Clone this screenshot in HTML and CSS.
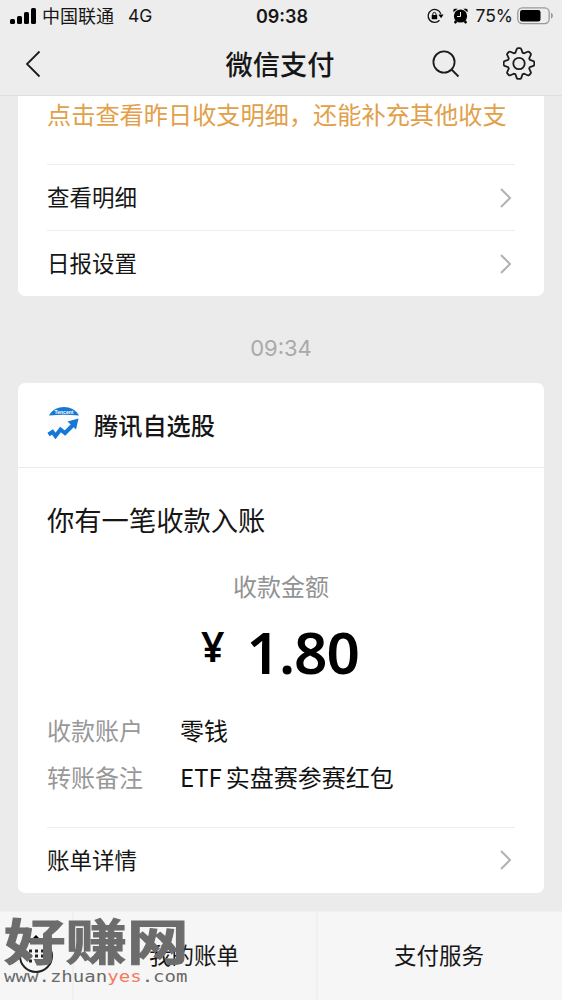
FILE: index.html
```html
<!DOCTYPE html>
<html lang="zh-CN">
<head>
<meta charset="utf-8">
<title>微信支付</title>
<link rel="stylesheet" href="styles.css">
</head>
<body>
<div class="screen">
  <header class="top">
    <div class="status">
      <div class="status-left">
        <svg class="signal" width="26" height="16" viewBox="0 0 26 16"><rect x="0" y="11" width="5" height="5" rx="1.5"/><rect x="7" y="8" width="5" height="8" rx="1.5"/><rect x="14" y="4" width="5" height="12" rx="1.5"/><rect x="21" y="0" width="5" height="16" rx="1.5"/></svg>
        <span class="carrier">中国联通</span><span class="network">4G</span>
      </div>
      <span class="clock">09:38</span>
      <div class="status-right">
        <svg width="17" height="16" viewBox="0 0 17 16"><path d="M12.500 12.300A6.500 6.500 0 1 1 13.800 5.800" fill="none" stroke="#111" stroke-width="1.300"/><path d="M11.300 6.500h5.200l-2.400 3.800z"/><rect x="4.700" y="7" width="5.500" height="4.200" rx=".6"/><path d="M5.800 7.500V6a1.600 1.600 0 0 1 3.200 0v1.500" fill="none" stroke="#111" stroke-width="1"/></svg>
        <svg class="alarm" width="15" height="16" viewBox="0 0 15 16"><circle cx="7.500" cy="8" r="6.600"/><path d="M.4 4.200V2Q.5.700 2 .7H4.700zM10.300.7H13Q14.500.700 14.600 2v2.200zM2 12l2.500 2L2.500 15.800 1 14.800zM13 12l-2.500 2 2 1.800 1.500-1z"/><path d="M7.500 4v4.500H4" fill="none" stroke="#ededed" stroke-width="1"/></svg>
        <span class="percent">75%</span>
        <svg class="battery" width="37" height="18" viewBox="0 0 37 18"><rect x=".8" y=".8" width="31.400" height="15.800" rx="4.500" fill="none" stroke="#999" stroke-width="1.300"/><rect x="3" y="3" width="20.500" height="11.500" rx="2.300"/><path d="M34 6c2.500.5 2.500 5 0 5.500z" fill="#999"/></svg>
      </div>
    </div>
    <nav class="nav">
      <svg class="back" width="16" height="28" viewBox="0 0 16 28"><path d="M14.500 1.500 2 14l12.500 12.500"/></svg>
      <h1 class="title">微信支付</h1>
      <div class="actions">
        <svg width="28" height="28" viewBox="0 0 28 28"><circle cx="12" cy="12" r="10.600"/><path d="m19.500 19.500 7 7"/></svg>
        <svg width="32" height="33" viewBox="-16 -16.500 32 33"><circle r="5.700"/><path d="M-3.600-10.800L-2.300-14.400Q-2-15.300-1-15.300H1Q2-15.300 2.300-14.400L3.600-10.800 5.100-10.200 8.600-11.800Q9.500-12.200 10.200-11.500L11.500-10.200Q12.200-9.500 11.800-8.600L10.200-5.100 10.800-3.600 14.400-2.300Q15.300-2 15.300-1V1Q15.300 2 14.400 2.300L10.800 3.600 10.200 5.100 11.800 8.600Q12.200 9.500 11.500 10.200L10.200 11.500Q9.500 12.200 8.600 11.800L5.100 10.200 3.600 10.800 2.300 14.400Q2 15.300 1 15.300H-1Q-2 15.300-2.300 14.400L-3.600 10.800-5.100 10.200-8.600 11.800Q-9.500 12.200-10.200 11.500L-11.500 10.200Q-12.200 9.500-11.800 8.600L-10.200 5.100-10.800 3.600-14.400 2.300Q-15.300 2-15.300 1V-1Q-15.300-2-14.400-2.300L-10.800-3.600-10.200-5.100-11.800-8.600Q-12.200-9.500-11.500-10.200L-10.200-11.500Q-9.500-12.200-8.600-11.800L-5.100-10.200Z"/></svg>
      </div>
    </nav>
  </header>

  <main class="feed">
    <section class="card daily">
      <p class="notice">点击查看昨日收支明细，还能补充其他收支</p>
      <div class="row"><span>查看明细</span><svg class="chevron" width="12" height="20" viewBox="0 0 12 20"><path d="m1 1 9 9-9 9"/></svg></div>
      <div class="row"><span>日报设置</span><svg class="chevron" width="12" height="20" viewBox="0 0 12 20"><path d="m1 1 9 9-9 9"/></svg></div>
    </section>
    <time class="time">09:34</time>
    <section class="card payment">
      <div class="merchant">
        <svg class="logo" width="34" height="36" viewBox="0 0 34 36"><circle cx="17" cy="18" r="16.500" fill="#fcfcfc"/><path d="M2 9.500C8-1.700 26-1.700 32 9.500Q17 8 2 9.500Z" fill="#1478d4"/><text x="17" y="7.500" text-anchor="middle" class="logo-text">Tencent</text><path d="m1.500 28.500 4-2.500 3 4 5-6.500 4.500 3.500 9-9" fill="none" stroke="#1478d4" stroke-width="4"/><path d="m20.500 15.500 11-3-2.500 11z" fill="#1478d4"/></svg>
        <span>腾讯自选股</span>
      </div>
      <h2 class="headline">你有一笔收款入账</h2>
      <div class="label">收款金额</div>
      <div class="amount"><span class="yen">¥</span><span>1.80</span></div>
      <dl class="details">
        <dt>收款账户</dt><dd>零钱</dd>
        <dt>转账备注</dt><dd><span class="etf">ETF</span>实盘赛参赛红包</dd>
      </dl>
      <div class="row"><span>账单详情</span><svg class="chevron" width="12" height="20" viewBox="0 0 12 20"><path d="m1 1 9 9-9 9"/></svg></div>
    </section>
  </main>

  <footer class="bottom">
    <div class="keypad"><svg width="36" height="42" viewBox="0 0 36 42"><path d="m14 4 4-4 4 4z"/><circle cx="18" cy="21" r="16" fill="none" stroke="#222" stroke-width="2"/><path d="M11 16h3m3 0h3m3 0h3m-15 5h3m3 0h3m3 0h3m-15 5h3m3 0h3m3 0h3" stroke="#222" stroke-width="3"/></svg></div>
    <div class="tab">我的账单</div>
    <div class="tab">支付服务</div>
    <div class="watermark">
      <div class="mark-name">好赚网</div>
      <div class="mark-url">www.zhuan<span class="accent">yes</span>.com</div>
    </div>
  </footer>
</div>
</body>
</html>
```
FILE: styles.css
```css
* { box-sizing: border-box; margin: 0; padding: 0; }
body { background: #ebebeb; color: #161616; font-family: "Noto Sans CJK SC", sans-serif; }
svg { display: block; flex: none; }
.screen { width: 562px; height: 1000px; display: flex; flex-direction: column; overflow: hidden; }

.top { height: 96px; flex: none; background: #ededed; border-bottom: 1px solid #dedede; }
.status { height: 32px; display: grid; grid-template-columns: 1fr auto 1fr; align-items: center; padding: 0 8px 0 10px; font-family: Inter, "Noto Sans CJK SC", sans-serif; }
.status-left, .status-right { display: flex; align-items: center; }
.status-right { justify-content: flex-end; }
.signal { margin: 0 6px 1px 0; }
.carrier { font-size: 18px; line-height: 28px; padding-top: 1px; }
.network { font-size: 17.5px; margin: 0 0 1px 14px; }
.clock { font-size: 18px; font-weight: 600; }
.alarm { margin-left: 9px; }
.percent { font-size: 17.5px; margin: 0 4px 1px 7px; }
.battery { margin-bottom: 1px; }
.nav { height: 63px; display: grid; grid-template-columns: 1fr auto 1fr; align-items: center; padding: 0 27px 0 25px; }
.nav svg { fill: none; stroke: #1c1c1c; stroke-width: 1.8; }
.title { font-size: 27.2px; font-weight: 500; line-height: 40px; padding-bottom: 2px; }
.actions { display: flex; align-items: center; justify-content: flex-end; gap: 43px; }

.feed { flex: 1; display: flex; flex-direction: column; padding: 0 18px; }
.card { background: #fff; border-radius: 7px; }
.daily { height: 200px; border-radius: 0 0 7px 7px; padding: 0 29px; }
.notice { height: 68px; font-size: 24.2px; line-height: 35px; color: #e2a04a; white-space: nowrap; }
.row { height: 66px; border-top: 1px solid #eee; display: flex; align-items: center; justify-content: space-between; font-size: 22.5px; padding-right: 3px; }
.row span { margin-bottom: 3px; }
.chevron { fill: none; stroke: #b2b2b2; stroke-width: 2; }
.time { height: 87px; font: 22px/105px Inter, sans-serif; color: #a9a9a9; text-align: center; }
.payment { height: 510px; }
.merchant { height: 85px; border-bottom: 1px solid #ebebeb; padding: 0 29px 2px; display: flex; align-items: center; gap: 13px; font-size: 24.2px; font-weight: 500; }
.logo-text { font: bold 5px "Liberation Sans", sans-serif; fill: #fff; }
.headline { padding: 30px 29px 0; font-size: 27.3px; line-height: 42px; font-weight: 400; }
.label { margin-top: 28px; text-align: center; font-size: 24px; line-height: 36px; color: #929292; }
.amount { height: 80px; margin-top: 7px; display: flex; justify-content: center; gap: 23px; font: 600 58.5px/80px "Noto Sans", sans-serif; letter-spacing: -1px; padding-right: 2px; color: #000; }
.yen { font-size: 41px; line-height: 71px; }
.details { display: grid; grid-template-columns: 133px 1fr; padding: 15px 29px 27px; font-size: 24px; line-height: 47px; color: #111; }
.details dt { color: #989898; }
.etf { margin-right: 4px; }
.payment .row { margin: 0 29px; height: 65px; }

.bottom { height: 89px; flex: none; position: relative; display: grid; grid-template-columns: 72px 244px 246px; background: #f6f6f6; border-top: 1px solid #f1f1f1; }
.keypad { padding: 23px 0 0 18px; }
.tab { border-left: 2px solid #f0f0f0; text-align: center; font-size: 22.5px; line-height: 85px; padding-right: 2px; }
.watermark { position: absolute; left: 4px; top: 1px; width: 190px; }
.mark-name { height: 55px; font-size: 61.5px; font-weight: 700; line-height: 52px; color: #6c6c6c; -webkit-text-stroke: 1.2px currentColor; transform: scaleY(.79); transform-origin: 0 50%; white-space: nowrap; }
.mark-url { font: 15px/18px "DejaVu Sans Mono", monospace; color: #696969; transform: scaleX(1.27); transform-origin: 0 0; white-space: nowrap; width: 150px; }
.accent { color: #f47b60; }
```
